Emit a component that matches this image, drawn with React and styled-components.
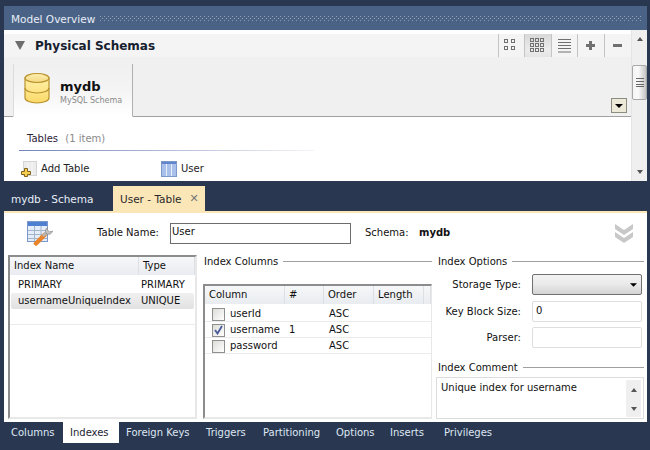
import styled, { createGlobalStyle } from 'styled-components';

const GlobalStyle = createGlobalStyle`
  html, body {
    margin: 0;
    padding: 0;
    background: #293751;
  }
  * {
    box-sizing: border-box;
  }
`;

const Page = styled.div`
  width: 650px;
  height: 450px;
  overflow: hidden;
  padding: 6px 3px 0 4px;
  background: #293751;
  color: #111;
  font-family: 'DejaVu Sans', Tahoma, sans-serif;
  font-size: 10px;
  line-height: 16px;
  display: flex;
  flex-direction: column;
`;

/* model overview */

const Overview = styled.section`
  height: 175px;
  display: flex;
  flex-direction: column;
`;

const OverviewHeader = styled.header`
  height: 24px;
  flex: none;
  background: #4a6286;
  color: #e8eef6;
  font-size: 10.5px;
  padding: 1px 0 0 7px;
  display: flex;
  align-items: center;
  gap: 5px;
`;

const Dots = styled.div`
  flex: 1;
  height: 5px;
  margin-right: 5px;
  background-image:
    radial-gradient(circle at 0.5px 0.5px, #8f9db3 0.6px, transparent 0.7px),
    radial-gradient(circle at 0.5px 0.5px, #a3a69f 0.6px, transparent 0.7px);
  background-size: 4px 4px;
  background-position: 0 0, 2px 2px;
`;

const OverviewBody = styled.div`
  flex: 1;
  min-height: 0;
  display: flex;
  background: #fff;
`;

const OverviewMain = styled.div`
  flex: 1;
  min-width: 0;
  padding-top: 4px;
  overflow: hidden;
`;

const SectionBar = styled.div`
  height: 23px;
  background: #f4f4f4;
  display: flex;
  align-items: center;
  padding-left: 11px;
`;

const Disclosure = styled.span`
  width: 0;
  height: 0;
  border-left: 5.5px solid transparent;
  border-right: 5.5px solid transparent;
  border-top: 9px solid #6e6e6e;
  margin-right: 10px;
`;

const SectionTitle = styled.h2`
  margin: 0;
  flex: 1;
  font-size: 12px;
  font-weight: 700;
  color: #16202f;
`;

const ViewButtons = styled.div`
  display: flex;
  align-self: stretch;
  margin-right: 1px;
`;

const ViewButton = styled.button`
  width: 26.5px;
  padding: 0;
  border: 0;
  border-left: 1px solid #c4c4c4;
  background: ${(p) => (p.$active ? 'linear-gradient(#d8d8d8, #ececec 70%, #e4e4e4)' : 'transparent')};
  display: flex;
  align-items: center;
  justify-content: center;
`;

const SchemaStrip = styled.div`
  height: 60px;
  background: #f0f0f0;
  border-bottom: 1px solid #a0a0a0;
  padding-left: 9px;
  display: flex;
  align-items: flex-end;
  justify-content: space-between;
`;

const SchemaTab = styled.div`
  width: 120px;
  height: 53px;
  margin-bottom: -1px;
  background: linear-gradient(#f0f0f0, #f4f4f4 50%, #fff);
  border-left: 1px solid #dcdcdc;
  border-right: 1px solid #b0b0b0;
  border-bottom: 1px solid #fff;
  padding: 8px 0 0 10px;
  display: flex;
  gap: 10px;
`;

const SchemaName = styled.div`
  font-size: 13px;
  font-weight: 700;
  line-height: 17px;
  color: #111;
  margin-top: 6px;
`;

const SchemaKind = styled.div`
  font-size: 8px;
  line-height: 10px;
  color: #8a8a8a;
  margin-top: 1px;
`;

const StripMenu = styled.button`
  width: 16px;
  height: 15px;
  margin: 0 4px 3px 0;
  padding: 0;
  background: #ece9d8;
  border: 1px solid #8c8c80;
  display: flex;
  align-items: center;
  justify-content: center;
`;

const TablesBlock = styled.div`
  padding: 14px 0 0 15px;
`;

const TablesTitle = styled.div`
  width: 295px;
  height: 20px;
  padding-left: 8px;
  color: #2c2235;
  border-bottom: 1px solid transparent;
  border-image: linear-gradient(to right, #6f83b8, #f4f4f8) 1;
`;

const Muted = styled.span`
  color: #8a8a8a;
  margin-left: 4px;
`;

const TableItems = styled.div`
  display: flex;
  margin-top: 10px;
  padding-left: 2px;
`;

const TableItem = styled.div`
  width: 140px;
  height: 16px;
  display: flex;
  align-items: center;
  gap: 4px;
  color: #222;
`;

const Scrollbar = styled.div`
  width: ${(p) => (p.$small ? '15px' : '16px')};
  flex: none;
  background: #efefef;
  border-left: 1px solid #e4e4e4;
  display: flex;
  flex-direction: column;
  align-items: center;
  justify-content: space-between;
  padding: 7px 0;
`;

const ScrollArrow = styled.span`
  width: 0;
  height: 0;
  border-left: 3.5px solid transparent;
  border-right: 3.5px solid transparent;
  ${(p) => (p.$down ? 'border-top: 4px solid #555;' : 'border-bottom: 4px solid #555;')}
`;

const ScrollThumb = styled.div`
  width: 15px;
  height: 35px;
  margin-top: 4px;
  margin-bottom: 51px;
  border: 1px solid #a8a8a8;
  border-radius: 2px;
  background: linear-gradient(to right, #f4f4f4, #fafafa 40%, #c4c4c4);
  display: flex;
  align-items: center;
  justify-content: center;
`;

/* document tabs */

const DocTabs = styled.nav`
  height: 31px;
  flex: none;
  display: flex;
  align-items: flex-end;
`;

const DocTab = styled.div`
  width: ${(p) => p.$width}px;
  height: 26px;
  padding: 5px 0 0 7px;
  display: flex;
  align-items: flex-start;
  gap: 8px;
  font-size: 10.5px;
  white-space: nowrap;
  color: ${(p) => (p.$active ? '#2a2a2a' : '#e8eef6')};
  background: ${(p) => (p.$active ? '#fbe6b8' : 'transparent')};
`;

const Close = styled.span`
  font-size: 11px;
  line-height: 16px;
  color: #777;
`;

/* table editor */

const Editor = styled.section`
  height: 211px;
  flex: none;
  background: #fff;
  border-top: 2px solid #fbe6b8;
  margin-top: -1px;
  padding: 8px 3px 3px 4px;
  display: flex;
  flex-direction: column;
`;

const EditorHead = styled.div`
  height: 24px;
  flex: none;
  display: flex;
  align-items: center;
  padding: 0 10px 0 19px;
`;

const HeadLabel = styled.label`
  width: ${(p) => p.$width}px;
  text-align: right;
  margin-right: 11px;
`;

const NameInput = styled.div`
  width: 181px;
  height: 21px;
  border: 1px solid #6d6d6d;
  padding-left: 1px;
  line-height: 16px;
  margin-right: 14px;
`;

const SchemaLabel = styled.span`
  width: 54px;
`;

const SchemaValue = styled.strong`
  flex: 1;
  font-weight: 700;
`;

const Panes = styled.div`
  flex: 1;
  min-height: 0;
  margin-top: 9px;
  display: flex;
`;

const IndexList = styled.div`
  width: 189px;
  flex: none;
  margin-top: 1px;
  border: 2px solid #e8e8e8;
  border-top-color: #8c8c8c;
  border-left-color: #8c8c8c;
  display: flex;
  flex-direction: column;
`;

const ListHeader = styled.div`
  height: 18px;
  flex: none;
  display: grid;
  grid-template-columns: ${(p) => p.$cols};
  background: linear-gradient(#f6f7f9, #e9ecf0);
`;

const HeaderCell = styled.div`
  padding: 1px 0 0 4px;
  line-height: 16px;
  border-right: 1px solid #dcdfe4;
  white-space: nowrap;
`;

const ListRows = styled.div`
  padding: 2px 0 0;
  height: 50px;
  border-bottom: 1px solid #ebebeb;
`;

const ListRow = styled.div`
  height: 16px;
  margin: 0 1px 0 1px;
  display: grid;
  grid-template-columns: 123px 1fr;
  padding-left: 7px;
  border-radius: 2px;
  background: ${(p) => (p.$selected ? 'linear-gradient(#f0f0f0, #e2e2e2)' : 'transparent')};
`;

const MiddlePane = styled.div`
  width: 229px;
  flex: none;
  margin-left: 6px;
  display: flex;
  flex-direction: column;
`;

const Legend = styled.div`
  height: 16px;
  flex: none;
  margin-top: ${(p) => p.$top || 0}px;
  display: flex;
  align-items: center;
  gap: 5px;
  padding-left: ${(p) => p.$indent || 0}px;
  white-space: nowrap;
  &::after {
    content: '';
    flex: 1;
    height: 1px;
    background: #a0a0a0;
    margin-top: -2px;
  }
`;

const ColumnsTable = styled.div`
  flex: 1;
  margin-top: 14px;
  border: 2px solid #e8e8e8;
  border-top-color: #8c8c8c;
  border-left-color: #8c8c8c;
  border-right-width: 1px;
`;

const ColumnRows = styled.div`
  padding-top: 2px;
`;

const ColumnRow = styled.div`
  height: 16px;
  display: grid;
  grid-template-columns: 80px 39px 50px 1fr;
  border-bottom: 1px solid #ebebeb;
`;

const CheckCell = styled.div`
  display: flex;
  align-items: center;
  gap: 5px;
  padding-left: 7px;
`;

const CheckBox = styled.span`
  width: 13px;
  height: 13px;
  flex: none;
  border: 1px solid #8e8f8f;
  background: linear-gradient(135deg, #dcdcd7, #fff);
  display: flex;
  align-items: center;
  justify-content: center;
`;

const Cell = styled.div`
  padding-left: ${(p) => p.$indent}px;
`;

const RightPane = styled.div`
  flex: 1;
  min-width: 0;
  margin-left: 4px;
  display: flex;
  flex-direction: column;
`;

const OptionRow = styled.div`
  display: grid;
  grid-template-columns: 85px 1fr;
  column-gap: 11px;
  align-items: center;
  margin-top: ${(p) => p.$top}px;
  padding-right: 2px;
`;

const OptionLabel = styled.label`
  text-align: right;
`;

const Select = styled.div`
  height: 21px;
  border: 1px solid #707070;
  border-radius: 2px;
  background: linear-gradient(#f2f2f2, #ebebeb 45%, #d4d4d4);
  display: flex;
  align-items: center;
  justify-content: flex-end;
  padding-right: 4px;
`;

const Field = styled.div`
  height: 21px;
  border: 1px solid #dedede;
  border-radius: 2px;
  padding: 1px 0 0 3px;
`;

const CommentBox = styled.div`
  flex: 1;
  margin-top: 1px;
  border: 1px solid #dcdcdc;
  padding: 2px 2px 1px 4px;
  display: flex;
  justify-content: space-between;
  line-height: 16px;
`;

const CommentScroll = styled(Scrollbar)`
  padding: 8px 0 6px;
  border-left: 0;
`;

/* bottom tabs */

const BottomTabs = styled.nav`
  height: 21px;
  flex: none;
  display: flex;
`;

const BottomTab = styled.div`
  width: ${(p) => p.$width}px;
  padding: 3px 0 0 7px;
  white-space: nowrap;
  color: ${(p) => (p.$active ? '#1c2433' : '#dfe7f2')};
  background: ${(p) => (p.$active ? '#fff' : 'transparent')};
`;

const DatabaseIcon = () => (
  <svg width="26" height="32" viewBox="0 0 26 32">
    <defs>
      <linearGradient id="dbBody" x1="0" x2="0" y1="0" y2="1">
        <stop offset="0" stopColor="#fff0a8" />
        <stop offset="1" stopColor="#fbd968" />
      </linearGradient>
      <linearGradient id="dbTop" x1="0" x2="0" y1="0" y2="1">
        <stop offset="0" stopColor="#fdeeb0" />
        <stop offset="1" stopColor="#f3d880" />
      </linearGradient>
    </defs>
    <path d="M1 6v20c0 2.800 5.400 5 12 5s12-2.200 12-5V6z" fill="url(#dbBody)" stroke="#b8922c" strokeWidth="1.200" />
    <path d="M1 16c0 2.800 5.400 5 12 5s12-2.200 12-5" fill="none" stroke="#b8922c" strokeWidth="1.200" />
    <ellipse cx="13" cy="6" rx="12" ry="4.500" fill="url(#dbTop)" stroke="#b8922c" strokeWidth="1.200" />
  </svg>
);

const AddTableIcon = () => (
  <svg width="16" height="16" viewBox="0 0 16 16">
    <rect x="2.500" y="0.500" width="13" height="14" fill="#ececec" stroke="#d4d4d4" />
    <path d="M7 1v13M11 1v13" stroke="#f8f8f8" />
    <path d="M3.500 7.500h3v3h3v3h-3v2h-3v-2h-3v-3h3z" fill="#f8d050" stroke="#80601a" />
  </svg>
);

const TableIcon = () => (
  <svg width="16" height="16" viewBox="0 0 16 16">
    <rect x="0.500" y="0.500" width="15" height="15" fill="#a8c0ea" stroke="#7c98c8" />
    <rect x="1" y="1" width="14" height="2" fill="#5f86cc" />
    <path d="M5.500 3v12M10.500 3v12" stroke="#e6eefa" />
  </svg>
);

const EditorIcon = () => (
  <svg width="26" height="25" viewBox="0 0 26 25">
    <rect x="0.500" y="0.500" width="20" height="20" fill="#e4edf9" stroke="#7c98c8" />
    <rect x="1" y="1" width="19" height="4" fill="#4f7fd0" />
    <path d="M1 9.500h19M1 13.500h19M1 17.500h19M7.500 5v15M14 5v15" stroke="#a4b4cc" />
    <path d="M9 22.500l8.500-8.500" stroke="#e8842a" strokeWidth="4.500" strokeLinecap="round" />
    <path d="M16 15l4-4" stroke="#b4b4b4" strokeWidth="3" />
    <path d="M20.500 6.500a4 4 0 0 0-1.500 5.500l1 1a4 4 0 0 0 5.500-3l-3 1-2-2z" fill="#c4c4c4" stroke="#8f8f8f" strokeWidth="0.800" />
  </svg>
);

const GridIcon = ({ count, gap }) => {
  const cells = [];
  for (let y = 0; y < count; y++) {
    for (let x = 0; x < count; x++) {
      cells.push(<rect key={`${x}-${y}`} x={x * gap + 0.5} y={y * gap + 0.5} width="3" height="3" fill="none" stroke="#707070" />);
    }
  }
  return (
    <svg width={count * gap} height={count * gap}>
      {cells}
    </svg>
  );
};

const LinesIcon = () => (
  <svg width="13" height="14" viewBox="0 0 13 14">
    <path d="M0 .5h13M0 3.500h13M0 6.500h13M0 9.500h13M0 13h13" stroke="#707070" />
  </svg>
);

const PlusIcon = () => (
  <svg width="9" height="9" viewBox="0 0 9 9">
    <path d="M3 0h3v3h3v3H6v3H3V6H0V3h3z" fill="#707070" />
  </svg>
);

const MinusIcon = () => (
  <svg width="9" height="3" viewBox="0 0 9 3">
    <rect width="9" height="3" fill="#707070" />
  </svg>
);

const ThumbGrip = () => (
  <svg width="8" height="9" viewBox="0 0 8 9">
    <path d="M0 .5h8M0 3.500h8M0 6.500h8M0 8.500h8" stroke="#666" />
  </svg>
);

const DownTriangle = ({ width = 8, height = 4, color = '#000' }) => (
  <svg width={width} height={height} viewBox="0 0 8 4">
    <path d="M0 0h8L4 4z" fill={color} />
  </svg>
);

const Chevrons = () => (
  <svg width="20" height="20" viewBox="0 0 20 20">
    <path d="M1 1l9 6 9-6v5l-9 6-9-6z" fill="#c8c8c8" />
    <path d="M1 9l9 6 9-6v5l-9 6-9-6z" fill="#c8c8c8" />
  </svg>
);

const Check = () => (
  <svg width="9" height="10" viewBox="0 0 9 10">
    <path d="M1 5l2.500 3.500L8 1" fill="none" stroke="#4a5a9c" strokeWidth="1.800" />
  </svg>
);

const bottomTabs = [
  ['Columns', 59],
  ['Indexes', 56],
  ['Foreign Keys', 80],
  ['Triggers', 57],
  ['Partitioning', 73],
  ['Options', 54],
  ['Inserts', 54],
  ['Privileges', 70],
];

const columns = [
  { name: 'userId', checked: false, order: '' },
  { name: 'username', checked: true, order: '1' },
  { name: 'password', checked: false, order: '' },
];

export default function App() {
  return (
    <Page>
      <GlobalStyle />
      <Overview>
        <OverviewHeader>
          Model Overview
          <Dots />
        </OverviewHeader>
        <OverviewBody>
          <OverviewMain>
            <SectionBar>
              <Disclosure />
              <SectionTitle>Physical Schemas</SectionTitle>
              <ViewButtons>
                <ViewButton><GridIcon count={2} gap={7} /></ViewButton>
                <ViewButton $active><GridIcon count={3} gap={5} /></ViewButton>
                <ViewButton><LinesIcon /></ViewButton>
                <ViewButton><PlusIcon /></ViewButton>
                <ViewButton><MinusIcon /></ViewButton>
              </ViewButtons>
            </SectionBar>
            <SchemaStrip>
              <SchemaTab>
                <DatabaseIcon />
                <div>
                  <SchemaName>mydb</SchemaName>
                  <SchemaKind>MySQL Schema</SchemaKind>
                </div>
              </SchemaTab>
              <StripMenu><DownTriangle /></StripMenu>
            </SchemaStrip>
            <TablesBlock>
              <TablesTitle>
                Tables <Muted>(1 item)</Muted>
              </TablesTitle>
              <TableItems>
                <TableItem><AddTableIcon />Add Table</TableItem>
                <TableItem><TableIcon />User</TableItem>
              </TableItems>
            </TablesBlock>
          </OverviewMain>
          <Scrollbar>
            <ScrollArrow />
            <ScrollThumb><ThumbGrip /></ScrollThumb>
            <ScrollArrow $down />
          </Scrollbar>
        </OverviewBody>
      </Overview>

      <DocTabs>
        <DocTab $width={109}>mydb - Schema</DocTab>
        <DocTab $width={92} $active>
          User - Table
          <Close>✕</Close>
        </DocTab>
      </DocTabs>

      <Editor>
        <EditorHead>
          <EditorIcon />
          <HeadLabel $width={106}>Table Name:</HeadLabel>
          <NameInput>User</NameInput>
          <SchemaLabel>Schema:</SchemaLabel>
          <SchemaValue>mydb</SchemaValue>
          <Chevrons />
        </EditorHead>
        <Panes>
          <IndexList>
            <ListHeader $cols="129px 1fr">
              <HeaderCell>Index Name</HeaderCell>
              <HeaderCell>Type</HeaderCell>
            </ListHeader>
            <ListRows>
              <ListRow>
                <span>PRIMARY</span>
                <span>PRIMARY</span>
              </ListRow>
              <ListRow $selected>
                <span>usernameUniqueIndex</span>
                <span>UNIQUE</span>
              </ListRow>
            </ListRows>
          </IndexList>
          <MiddlePane>
            <Legend $indent={1}>Index Columns</Legend>
            <ColumnsTable>
              <ListHeader $cols="80px 39px 50px 50px 1fr">
                <HeaderCell>Column</HeaderCell>
                <HeaderCell>#</HeaderCell>
                <HeaderCell>Order</HeaderCell>
                <HeaderCell>Length</HeaderCell>
                <HeaderCell />
              </ListHeader>
              <ColumnRows>
                {columns.map((col) => (
                  <ColumnRow key={col.name}>
                    <CheckCell>
                      <CheckBox>{col.checked && <Check />}</CheckBox>
                      {col.name}
                    </CheckCell>
                    <Cell $indent={4}>{col.order}</Cell>
                    <Cell $indent={5}>ASC</Cell>
                    <Cell $indent={0} />
                  </ColumnRow>
                ))}
              </ColumnRows>
            </ColumnsTable>
          </MiddlePane>
          <RightPane>
            <Legend $indent={2}>Index Options</Legend>
            <OptionRow $top={4}>
              <OptionLabel>Storage Type:</OptionLabel>
              <Select><DownTriangle width={7} height={4} /></Select>
            </OptionRow>
            <OptionRow $top={6}>
              <OptionLabel>Key Block Size:</OptionLabel>
              <Field>0</Field>
            </OptionRow>
            <OptionRow $top={5}>
              <OptionLabel>Parser:</OptionLabel>
              <Field />
            </OptionRow>
            <Legend $indent={2} $top={12}>Index Comment</Legend>
            <CommentBox>
              Unique index for username
              <CommentScroll $small>
                <ScrollArrow />
                <ScrollArrow $down />
              </CommentScroll>
            </CommentBox>
          </RightPane>
        </Panes>
      </Editor>

      <BottomTabs>
        {bottomTabs.map(([label, width]) => (
          <BottomTab key={label} $width={width} $active={label === 'Indexes'}>
            {label}
          </BottomTab>
        ))}
      </BottomTabs>
    </Page>
  );
}
